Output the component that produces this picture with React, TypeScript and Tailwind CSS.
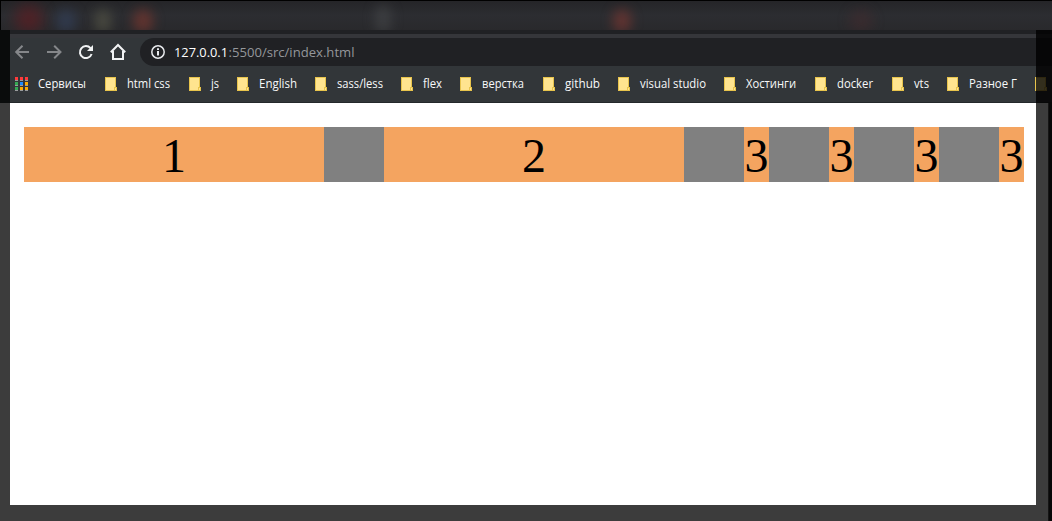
const bookmarks = [
  { label: "html css", width: "w-[84px]", text: "w-[43px]", len: 43 },
  { label: "js", width: "w-[48px]", text: "w-[8px]", len: 8 },
  { label: "English", width: "w-[78px]", text: "w-[38px]", len: 38 },
  { label: "sass/less", width: "w-[86px]", text: "w-[46px]", len: 46 },
  { label: "flex", width: "w-[59px]", text: "w-[19px]", len: 19 },
  { label: "верстка", width: "w-[83px]", text: "w-[42px]", len: 42 },
  { label: "github", width: "w-[75px]", text: "w-[35px]", len: 35 },
  { label: "visual studio", width: "w-[106px]", text: "w-[66px]", len: 66 },
  { label: "Хостинги", width: "w-[91px]", text: "w-[50px]", len: 50 },
  { label: "docker", width: "w-[77px]", text: "w-[36px]", len: 36 },
  { label: "vts", width: "w-[55px]", text: "w-[15px]", len: 15 },
  { label: "Разное Г", width: "w-[88px]", text: "w-[48px]", len: 48 },
  { label: "", width: "w-[17px]", text: "w-0", len: 0 },
];

const apps = [
  "bg-[#ff3b3b]", "bg-[#ff3b3b]", "bg-[#ff3b3b]",
  "bg-[#34a853]", "bg-[#1a8cff]", "bg-[#fbab00]",
  "bg-[#34a853]", "bg-[#fbab00]", "bg-[#fbab00]",
];

function Folder() {
  return (
    <svg className="h-[14px] w-3 shrink-0" viewBox="0 0 12 14" shapeRendering="crispEdges">
      <path d="M0 0h11v10h1v4H0z" fill="#e8c44c" />
      <path d="M1 1h9v9H9v3H1z" fill="#ffe48f" />
      <path d="M10 11h1v2h-1z" fill="#ffe48f" />
    </svg>
  );
}

function TabStrip() {
  return (
    <div className="relative h-[30px] shrink-0 overflow-hidden border-l border-t border-black bg-linear-to-b from-[#252528] via-[#2c2d31] to-[#29292c]">
      <div className="absolute left-[14px] top-1 h-7 w-7 rounded-full bg-[#651a20]/60 blur-[7px]" />
      <div className="absolute left-[55px] top-2 h-6 w-5 rounded-full bg-[#35486a]/50 blur-[6px]" />
      <div className="absolute left-[94px] top-2 h-6 w-4 rounded-full bg-[#65654f]/50 blur-[6px]" />
      <div className="absolute left-[132px] top-2 h-6 w-5 rounded-full bg-[#85382e]/60 blur-[6px]" />
      <div className="absolute left-[374px] top-1 h-7 w-4 rounded-full bg-[#505154]/45 blur-[6px]" />
      <div className="absolute left-[612px] top-2 h-6 w-[18px] rounded-full bg-[#853832]/60 blur-[6px]" />
      <div className="absolute left-[848px] top-2 h-6 w-6 rounded-full bg-[#502c2f]/35 blur-[6px]" />
    </div>
  );
}

function Toolbar() {
  return (
    <div className="flex h-7 shrink-0">
      <div className="flex w-[130px] shrink-0">
        <svg width="130" height="28" fill="none" strokeWidth="2">
          <path d="M19 14H6M12.5 7.7 6.2 14l6.3 6.3" stroke="#85878a" />
          <path d="M37 14h13.5M44.2 7.7 50.5 14l-6.3 6.3" stroke="#85878a" />
          <path d="M80.5 10.2A6 6 0 1 0 81.6 16" stroke="#f1f3f4" />
          <path d="M83 7v6h-6z" fill="#f1f3f4" />
          <path d="M100.8 14.2 108 7l7.2 7.2M103 13v8h10v-8" stroke="#f1f3f4" />
        </svg>
      </div>
      <div className="flex min-w-0 flex-1 items-center rounded-l-full bg-[#202124] pl-[11px]">
        <svg className="shrink-0" width="14" height="14" fill="none">
          <circle cx="7" cy="7" r="6.2" stroke="#e8eaed" strokeWidth="1.5" />
          <path d="M7 6v4.5M7 3.3v1.6" stroke="#e8eaed" strokeWidth="2" />
        </svg>
        <svg className="ml-[9px] h-7 w-[190px] shrink-0 font-['Open_Sans','Noto_Sans',sans-serif] text-[13.5px]">
          <text x="0" y="19" textLength="54" lengthAdjust="spacingAndGlyphs" fill="#ffffff">127.0.0.1</text>
          <text x="54.5" y="19" textLength="126" lengthAdjust="spacingAndGlyphs" fill="#94979b">:5500/src/index.html</text>
        </svg>
      </div>
    </div>
  );
}

function Label({ text, len }: { text: string; len: number }) {
  return (
    <svg className="h-5 w-full overflow-visible text-[12px] font-medium">
      <text x="0" y="14" textLength={len} lengthAdjust="spacingAndGlyphs" fill="#f8f9fa">{text}</text>
    </svg>
  );
}

function Bookmarks() {
  return (
    <div className="flex h-[37px] shrink-0 items-center overflow-hidden border-b border-[#24282b] bg-[#323639] pl-[5px] font-['Open_Sans','Noto_Sans',sans-serif]">
      <div className="flex w-[90px] shrink-0 items-center">
        <div className="grid shrink-0 grid-cols-3 gap-x-[2px] gap-y-[1px]">
          {apps.map((color, i) => (
            <span key={i} className={`h-1 w-[3px] border-b border-[#999b9d] ${color}`} />
          ))}
        </div>
        <div className="ml-[10px] w-12">
          <Label text="Сервисы" len={48} />
        </div>
      </div>
      {bookmarks.map((item, i) => (
        <div key={i} className={`flex shrink-0 items-center gap-[10px] ${item.width}`}>
          <Folder />
          {item.label && (
            <div className={item.text}>
              <Label text={item.label} len={item.len} />
            </div>
          )}
        </div>
      ))}
    </div>
  );
}

export default function App() {
  return (
    <div className="relative flex h-[521px] w-[1052px] flex-col overflow-hidden bg-[#3c3c3c]">
      <TabStrip />
      <div className="h-1 shrink-0 bg-[#202124]" />
      <div className="flex h-[69px] shrink-0 flex-col bg-[#323639] pl-[10px]">
        <div className="h-1 shrink-0 bg-[#35363a]" />
        <Toolbar />
        <Bookmarks />
      </div>
      <div className="flex h-[418px] shrink-0">
        <div className="ml-[10px] h-[402px] w-[1026px] bg-white px-[14px] pt-6">
          <div className="flex h-[55px] w-[1000px] gap-[60px] bg-[#808080] text-center font-['Liberation_Serif',serif] text-[48px] leading-[57px] text-black">
            <div className="w-[300px] bg-[#f4a460]">1</div>
            <div className="w-[300px] bg-[#f4a460]">2</div>
            <div className="w-[25px] bg-[#f4a460]">3</div>
            <div className="w-[25px] bg-[#f4a460]">3</div>
            <div className="w-[25px] bg-[#f4a460]">3</div>
            <div className="w-[25px] bg-[#f4a460]">3</div>
          </div>
        </div>
        <div className="ml-3 w-1 border-l border-[#151515] bg-[#080808]" />
      </div>
      <div className="absolute left-0 top-[30px] h-[73px] w-[10px] bg-[#0a0c0c]" />
      <div className="absolute right-0 top-[30px] h-[73px] w-4 bg-black/80" />
    </div>
  );
}
